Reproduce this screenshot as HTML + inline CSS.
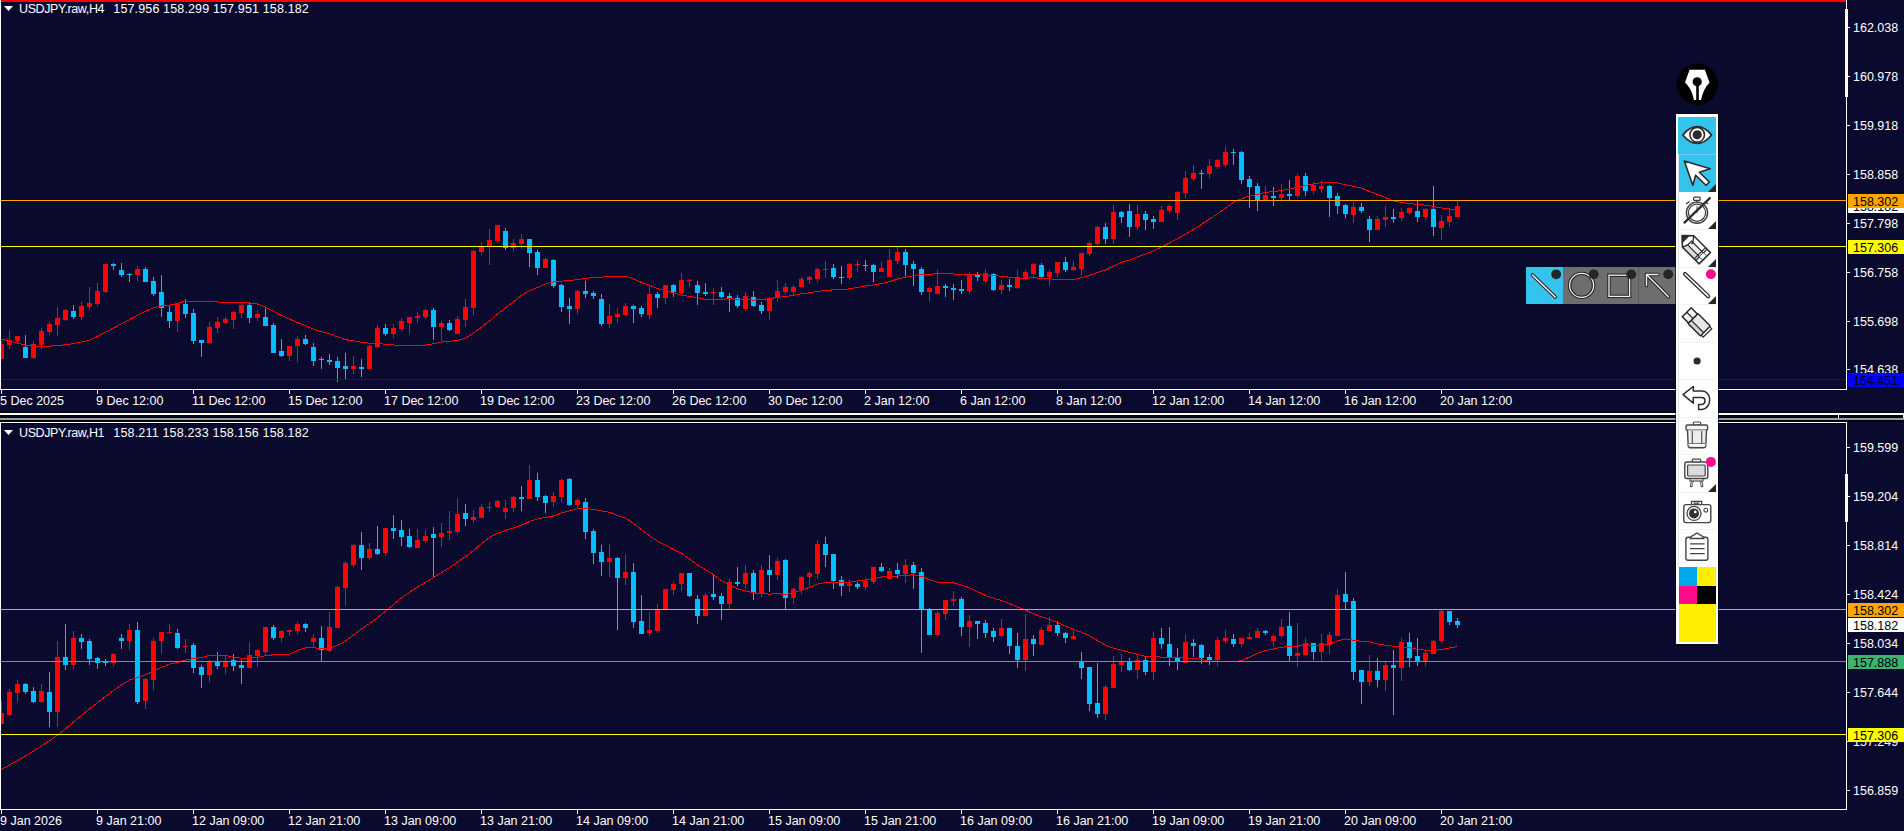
<!DOCTYPE html><html><head><meta charset="utf-8"><style>
html,body{margin:0;padding:0;background:#0a0a2e;width:1904px;height:831px;overflow:hidden}
svg{position:absolute;left:0;top:0;display:block}
text{font-family:"Liberation Sans",sans-serif;font-size:12.5px}
</style></head><body>
<svg width="1904" height="831" viewBox="0 0 1904 831">
<rect width="1904" height="831" fill="#0a0a2e"/>
<defs><clipPath id="ct"><rect x="1" y="2" width="1845" height="387"/></clipPath><clipPath id="cb"><rect x="1" y="424" width="1845" height="385"/></clipPath></defs>
<g shape-rendering="crispEdges">
<rect x="0" y="0" width="1846" height="2" fill="#ff0000"/>
<rect x="0" y="0" width="1" height="390" fill="#fff"/>
<rect x="0" y="389" width="1847" height="1" fill="#fff"/>
<rect x="1846" y="0" width="1" height="390" fill="#fff"/>
<rect x="1845" y="9" width="3" height="88" fill="#fff"/>
<rect x="1847" y="27" width="3" height="1" fill="#fff"/>
<rect x="1847" y="76" width="3" height="1" fill="#fff"/>
<rect x="1847" y="125" width="3" height="1" fill="#fff"/>
<rect x="1847" y="174" width="3" height="1" fill="#fff"/>
<rect x="1847" y="223" width="3" height="1" fill="#fff"/>
<rect x="1847" y="272" width="3" height="1" fill="#fff"/>
<rect x="1847" y="321" width="3" height="1" fill="#fff"/>
<rect x="1847" y="369" width="3" height="1" fill="#fff"/>
<rect x="1" y="390" width="1" height="4" fill="#fff"/>
<rect x="97" y="390" width="1" height="4" fill="#fff"/>
<rect x="193" y="390" width="1" height="4" fill="#fff"/>
<rect x="289" y="390" width="1" height="4" fill="#fff"/>
<rect x="385" y="390" width="1" height="4" fill="#fff"/>
<rect x="481" y="390" width="1" height="4" fill="#fff"/>
<rect x="577" y="390" width="1" height="4" fill="#fff"/>
<rect x="673" y="390" width="1" height="4" fill="#fff"/>
<rect x="769" y="390" width="1" height="4" fill="#fff"/>
<rect x="865" y="390" width="1" height="4" fill="#fff"/>
<rect x="961" y="390" width="1" height="4" fill="#fff"/>
<rect x="1057" y="390" width="1" height="4" fill="#fff"/>
<rect x="1153" y="390" width="1" height="4" fill="#fff"/>
<rect x="1249" y="390" width="1" height="4" fill="#fff"/>
<rect x="1345" y="390" width="1" height="4" fill="#fff"/>
<rect x="1441" y="390" width="1" height="4" fill="#fff"/>
<rect x="0" y="412" width="1904" height="1" fill="#000"/>
<rect x="0" y="413" width="1904" height="2" fill="#fff"/>
<rect x="0" y="415" width="1904" height="1" fill="#000"/>
<rect x="0" y="416" width="1904" height="2" fill="#04041a"/>
<rect x="0" y="418" width="1904" height="2" fill="#9c9c96"/>
<rect x="0" y="420" width="1904" height="2" fill="#020210"/>
<rect x="1838" y="415" width="1" height="3" fill="#fff"/>
<rect x="1903" y="413" width="1" height="5" fill="#fff"/>
<rect x="0" y="422" width="1847" height="1" fill="#fff"/>
<rect x="0" y="423" width="1847" height="1" fill="#000"/>
<rect x="0" y="422" width="1" height="388" fill="#fff"/>
<rect x="0" y="809" width="1847" height="1" fill="#fff"/>
<rect x="1846" y="422" width="1" height="388" fill="#fff"/>
<rect x="1845" y="474" width="3" height="48" fill="#fff"/>
<rect x="1847" y="447" width="3" height="1" fill="#fff"/>
<rect x="1847" y="496" width="3" height="1" fill="#fff"/>
<rect x="1847" y="545" width="3" height="1" fill="#fff"/>
<rect x="1847" y="594" width="3" height="1" fill="#fff"/>
<rect x="1847" y="643" width="3" height="1" fill="#fff"/>
<rect x="1847" y="692" width="3" height="1" fill="#fff"/>
<rect x="1847" y="741" width="3" height="1" fill="#fff"/>
<rect x="1847" y="790" width="3" height="1" fill="#fff"/>
<rect x="1" y="810" width="1" height="4" fill="#fff"/>
<rect x="97" y="810" width="1" height="4" fill="#fff"/>
<rect x="193" y="810" width="1" height="4" fill="#fff"/>
<rect x="289" y="810" width="1" height="4" fill="#fff"/>
<rect x="385" y="810" width="1" height="4" fill="#fff"/>
<rect x="481" y="810" width="1" height="4" fill="#fff"/>
<rect x="577" y="810" width="1" height="4" fill="#fff"/>
<rect x="673" y="810" width="1" height="4" fill="#fff"/>
<rect x="769" y="810" width="1" height="4" fill="#fff"/>
<rect x="865" y="810" width="1" height="4" fill="#fff"/>
<rect x="961" y="810" width="1" height="4" fill="#fff"/>
<rect x="1057" y="810" width="1" height="4" fill="#fff"/>
<rect x="1153" y="810" width="1" height="4" fill="#fff"/>
<rect x="1249" y="810" width="1" height="4" fill="#fff"/>
<rect x="1345" y="810" width="1" height="4" fill="#fff"/>
<rect x="1441" y="810" width="1" height="4" fill="#fff"/>
</g>
<g shape-rendering="crispEdges" clip-path="url(#ct)">
<rect x="1" y="341" width="1" height="18" fill="#ff0000"/>
<rect x="-1" y="344" width="5" height="15" fill="#ff0000"/>
<rect x="9" y="330" width="1" height="19" fill="#ff0000"/>
<rect x="7" y="340" width="5" height="5" fill="#ff0000"/>
<rect x="17" y="336" width="1" height="6" fill="#ff0000"/>
<rect x="15" y="336" width="5" height="5" fill="#ff0000"/>
<rect x="25" y="335" width="1" height="23" fill="#00bfff"/>
<rect x="23" y="347" width="5" height="11" fill="#00bfff"/>
<rect x="33" y="341" width="1" height="18" fill="#ff0000"/>
<rect x="31" y="344" width="5" height="14" fill="#ff0000"/>
<rect x="41" y="328" width="1" height="21" fill="#ff0000"/>
<rect x="39" y="331" width="5" height="14" fill="#ff0000"/>
<rect x="49" y="322" width="1" height="13" fill="#ff0000"/>
<rect x="47" y="324" width="5" height="8" fill="#ff0000"/>
<rect x="57" y="307" width="1" height="29" fill="#ff0000"/>
<rect x="55" y="318" width="5" height="7" fill="#ff0000"/>
<rect x="65" y="309" width="1" height="12" fill="#ff0000"/>
<rect x="63" y="310" width="5" height="10" fill="#ff0000"/>
<rect x="73" y="305" width="1" height="14" fill="#00bfff"/>
<rect x="71" y="311" width="5" height="6" fill="#00bfff"/>
<rect x="81" y="302" width="1" height="18" fill="#ff0000"/>
<rect x="79" y="306" width="5" height="11" fill="#ff0000"/>
<rect x="89" y="287" width="1" height="23" fill="#ff0000"/>
<rect x="87" y="303" width="5" height="4" fill="#ff0000"/>
<rect x="97" y="283" width="1" height="23" fill="#ff0000"/>
<rect x="95" y="291" width="5" height="13" fill="#ff0000"/>
<rect x="105" y="264" width="1" height="29" fill="#ff0000"/>
<rect x="103" y="264" width="5" height="28" fill="#ff0000"/>
<rect x="113" y="263" width="1" height="7" fill="#00bfff"/>
<rect x="111" y="264" width="5" height="2" fill="#00bfff"/>
<rect x="121" y="263" width="1" height="14" fill="#00bfff"/>
<rect x="119" y="270" width="5" height="5" fill="#00bfff"/>
<rect x="129" y="273" width="1" height="9" fill="#00bfff"/>
<rect x="127" y="274" width="5" height="1" fill="#00bfff"/>
<rect x="137" y="266" width="1" height="15" fill="#ff0000"/>
<rect x="135" y="269" width="5" height="6" fill="#ff0000"/>
<rect x="145" y="267" width="1" height="15" fill="#00bfff"/>
<rect x="143" y="269" width="5" height="13" fill="#00bfff"/>
<rect x="153" y="277" width="1" height="19" fill="#00bfff"/>
<rect x="151" y="281" width="5" height="13" fill="#00bfff"/>
<rect x="161" y="275" width="1" height="42" fill="#00bfff"/>
<rect x="159" y="292" width="5" height="16" fill="#00bfff"/>
<rect x="169" y="306" width="1" height="22" fill="#00bfff"/>
<rect x="167" y="312" width="5" height="9" fill="#00bfff"/>
<rect x="177" y="303" width="1" height="29" fill="#ff0000"/>
<rect x="175" y="303" width="5" height="18" fill="#ff0000"/>
<rect x="185" y="299" width="1" height="19" fill="#00bfff"/>
<rect x="183" y="304" width="5" height="10" fill="#00bfff"/>
<rect x="193" y="309" width="1" height="35" fill="#00bfff"/>
<rect x="191" y="313" width="5" height="28" fill="#00bfff"/>
<rect x="201" y="340" width="1" height="17" fill="#00bfff"/>
<rect x="199" y="340" width="5" height="3" fill="#00bfff"/>
<rect x="209" y="322" width="1" height="22" fill="#ff0000"/>
<rect x="207" y="327" width="5" height="16" fill="#ff0000"/>
<rect x="217" y="317" width="1" height="16" fill="#ff0000"/>
<rect x="215" y="322" width="5" height="6" fill="#ff0000"/>
<rect x="225" y="317" width="1" height="7" fill="#ff0000"/>
<rect x="223" y="319" width="5" height="4" fill="#ff0000"/>
<rect x="233" y="311" width="1" height="18" fill="#ff0000"/>
<rect x="231" y="312" width="5" height="8" fill="#ff0000"/>
<rect x="241" y="302" width="1" height="16" fill="#ff0000"/>
<rect x="239" y="305" width="5" height="8" fill="#ff0000"/>
<rect x="249" y="303" width="1" height="20" fill="#00bfff"/>
<rect x="247" y="305" width="5" height="13" fill="#00bfff"/>
<rect x="257" y="310" width="1" height="11" fill="#ff0000"/>
<rect x="255" y="314" width="5" height="4" fill="#ff0000"/>
<rect x="265" y="307" width="1" height="19" fill="#00bfff"/>
<rect x="263" y="317" width="5" height="9" fill="#00bfff"/>
<rect x="273" y="323" width="1" height="30" fill="#00bfff"/>
<rect x="271" y="325" width="5" height="28" fill="#00bfff"/>
<rect x="281" y="339" width="1" height="18" fill="#00bfff"/>
<rect x="279" y="351" width="5" height="5" fill="#00bfff"/>
<rect x="289" y="346" width="1" height="15" fill="#ff0000"/>
<rect x="287" y="346" width="5" height="10" fill="#ff0000"/>
<rect x="297" y="336" width="1" height="26" fill="#ff0000"/>
<rect x="295" y="339" width="5" height="7" fill="#ff0000"/>
<rect x="305" y="335" width="1" height="10" fill="#00bfff"/>
<rect x="303" y="339" width="5" height="5" fill="#00bfff"/>
<rect x="313" y="343" width="1" height="23" fill="#00bfff"/>
<rect x="311" y="347" width="5" height="14" fill="#00bfff"/>
<rect x="321" y="357" width="1" height="12" fill="#00bfff"/>
<rect x="319" y="359" width="5" height="1" fill="#00bfff"/>
<rect x="329" y="354" width="1" height="11" fill="#00bfff"/>
<rect x="327" y="360" width="5" height="2" fill="#00bfff"/>
<rect x="337" y="357" width="1" height="25" fill="#00bfff"/>
<rect x="335" y="361" width="5" height="7" fill="#00bfff"/>
<rect x="345" y="353" width="1" height="26" fill="#00bfff"/>
<rect x="343" y="366" width="5" height="3" fill="#00bfff"/>
<rect x="353" y="356" width="1" height="18" fill="#ff0000"/>
<rect x="351" y="366" width="5" height="3" fill="#ff0000"/>
<rect x="361" y="359" width="1" height="18" fill="#00bfff"/>
<rect x="359" y="367" width="5" height="2" fill="#00bfff"/>
<rect x="369" y="345" width="1" height="24" fill="#ff0000"/>
<rect x="367" y="346" width="5" height="23" fill="#ff0000"/>
<rect x="377" y="325" width="1" height="23" fill="#ff0000"/>
<rect x="375" y="328" width="5" height="19" fill="#ff0000"/>
<rect x="385" y="324" width="1" height="12" fill="#00bfff"/>
<rect x="383" y="328" width="5" height="6" fill="#00bfff"/>
<rect x="393" y="324" width="1" height="14" fill="#ff0000"/>
<rect x="391" y="328" width="5" height="6" fill="#ff0000"/>
<rect x="401" y="318" width="1" height="13" fill="#ff0000"/>
<rect x="399" y="321" width="5" height="8" fill="#ff0000"/>
<rect x="409" y="317" width="1" height="17" fill="#ff0000"/>
<rect x="407" y="317" width="5" height="6" fill="#ff0000"/>
<rect x="417" y="312" width="1" height="11" fill="#ff0000"/>
<rect x="415" y="316" width="5" height="2" fill="#ff0000"/>
<rect x="425" y="309" width="1" height="10" fill="#ff0000"/>
<rect x="423" y="310" width="5" height="7" fill="#ff0000"/>
<rect x="433" y="308" width="1" height="32" fill="#00bfff"/>
<rect x="431" y="310" width="5" height="17" fill="#00bfff"/>
<rect x="441" y="321" width="1" height="20" fill="#ff0000"/>
<rect x="439" y="323" width="5" height="4" fill="#ff0000"/>
<rect x="449" y="320" width="1" height="11" fill="#00bfff"/>
<rect x="447" y="323" width="5" height="7" fill="#00bfff"/>
<rect x="457" y="316" width="1" height="18" fill="#ff0000"/>
<rect x="455" y="319" width="5" height="15" fill="#ff0000"/>
<rect x="465" y="299" width="1" height="28" fill="#ff0000"/>
<rect x="463" y="307" width="5" height="13" fill="#ff0000"/>
<rect x="473" y="250" width="1" height="65" fill="#ff0000"/>
<rect x="471" y="251" width="5" height="57" fill="#ff0000"/>
<rect x="481" y="242" width="1" height="13" fill="#ff0000"/>
<rect x="479" y="246" width="5" height="6" fill="#ff0000"/>
<rect x="489" y="229" width="1" height="36" fill="#ff0000"/>
<rect x="487" y="240" width="5" height="6" fill="#ff0000"/>
<rect x="497" y="225" width="1" height="18" fill="#ff0000"/>
<rect x="495" y="225" width="5" height="16" fill="#ff0000"/>
<rect x="505" y="228" width="1" height="22" fill="#00bfff"/>
<rect x="503" y="231" width="5" height="17" fill="#00bfff"/>
<rect x="513" y="239" width="1" height="12" fill="#ff0000"/>
<rect x="511" y="243" width="5" height="5" fill="#ff0000"/>
<rect x="521" y="234" width="1" height="15" fill="#ff0000"/>
<rect x="519" y="239" width="5" height="5" fill="#ff0000"/>
<rect x="529" y="239" width="1" height="28" fill="#00bfff"/>
<rect x="527" y="239" width="5" height="14" fill="#00bfff"/>
<rect x="537" y="250" width="1" height="25" fill="#00bfff"/>
<rect x="535" y="252" width="5" height="16" fill="#00bfff"/>
<rect x="545" y="258" width="1" height="10" fill="#ff0000"/>
<rect x="543" y="259" width="5" height="9" fill="#ff0000"/>
<rect x="553" y="259" width="1" height="29" fill="#00bfff"/>
<rect x="551" y="260" width="5" height="26" fill="#00bfff"/>
<rect x="561" y="284" width="1" height="28" fill="#00bfff"/>
<rect x="559" y="285" width="5" height="22" fill="#00bfff"/>
<rect x="569" y="298" width="1" height="26" fill="#00bfff"/>
<rect x="567" y="306" width="5" height="3" fill="#00bfff"/>
<rect x="577" y="290" width="1" height="24" fill="#ff0000"/>
<rect x="575" y="291" width="5" height="18" fill="#ff0000"/>
<rect x="585" y="281" width="1" height="17" fill="#00bfff"/>
<rect x="583" y="291" width="5" height="3" fill="#00bfff"/>
<rect x="593" y="291" width="1" height="8" fill="#00bfff"/>
<rect x="591" y="293" width="5" height="3" fill="#00bfff"/>
<rect x="601" y="294" width="1" height="32" fill="#00bfff"/>
<rect x="599" y="299" width="5" height="25" fill="#00bfff"/>
<rect x="609" y="304" width="1" height="24" fill="#ff0000"/>
<rect x="607" y="316" width="5" height="8" fill="#ff0000"/>
<rect x="617" y="308" width="1" height="15" fill="#ff0000"/>
<rect x="615" y="314" width="5" height="3" fill="#ff0000"/>
<rect x="625" y="303" width="1" height="13" fill="#ff0000"/>
<rect x="623" y="306" width="5" height="9" fill="#ff0000"/>
<rect x="633" y="305" width="1" height="18" fill="#00bfff"/>
<rect x="631" y="306" width="5" height="3" fill="#00bfff"/>
<rect x="641" y="306" width="1" height="11" fill="#00bfff"/>
<rect x="639" y="308" width="5" height="6" fill="#00bfff"/>
<rect x="649" y="285" width="1" height="34" fill="#ff0000"/>
<rect x="647" y="294" width="5" height="21" fill="#ff0000"/>
<rect x="657" y="292" width="1" height="16" fill="#00bfff"/>
<rect x="655" y="294" width="5" height="4" fill="#00bfff"/>
<rect x="665" y="285" width="1" height="19" fill="#ff0000"/>
<rect x="663" y="285" width="5" height="13" fill="#ff0000"/>
<rect x="673" y="284" width="1" height="13" fill="#00bfff"/>
<rect x="671" y="285" width="5" height="7" fill="#00bfff"/>
<rect x="681" y="273" width="1" height="21" fill="#ff0000"/>
<rect x="679" y="280" width="5" height="13" fill="#ff0000"/>
<rect x="689" y="279" width="1" height="8" fill="#ff0000"/>
<rect x="687" y="280" width="5" height="1" fill="#ff0000"/>
<rect x="697" y="281" width="1" height="24" fill="#00bfff"/>
<rect x="695" y="285" width="5" height="8" fill="#00bfff"/>
<rect x="705" y="283" width="1" height="13" fill="#00bfff"/>
<rect x="703" y="292" width="5" height="2" fill="#00bfff"/>
<rect x="713" y="288" width="1" height="17" fill="#ff0000"/>
<rect x="711" y="292" width="5" height="1" fill="#ff0000"/>
<rect x="721" y="287" width="1" height="11" fill="#00bfff"/>
<rect x="719" y="292" width="5" height="5" fill="#00bfff"/>
<rect x="729" y="293" width="1" height="19" fill="#00bfff"/>
<rect x="727" y="296" width="5" height="2" fill="#00bfff"/>
<rect x="737" y="295" width="1" height="13" fill="#00bfff"/>
<rect x="735" y="298" width="5" height="8" fill="#00bfff"/>
<rect x="745" y="292" width="1" height="19" fill="#ff0000"/>
<rect x="743" y="296" width="5" height="13" fill="#ff0000"/>
<rect x="753" y="291" width="1" height="16" fill="#00bfff"/>
<rect x="751" y="297" width="5" height="9" fill="#00bfff"/>
<rect x="761" y="302" width="1" height="12" fill="#00bfff"/>
<rect x="759" y="305" width="5" height="6" fill="#00bfff"/>
<rect x="769" y="297" width="1" height="23" fill="#ff0000"/>
<rect x="767" y="298" width="5" height="13" fill="#ff0000"/>
<rect x="777" y="280" width="1" height="22" fill="#ff0000"/>
<rect x="775" y="291" width="5" height="7" fill="#ff0000"/>
<rect x="785" y="283" width="1" height="11" fill="#ff0000"/>
<rect x="783" y="287" width="5" height="5" fill="#ff0000"/>
<rect x="793" y="285" width="1" height="10" fill="#ff0000"/>
<rect x="791" y="287" width="5" height="5" fill="#ff0000"/>
<rect x="801" y="277" width="1" height="11" fill="#ff0000"/>
<rect x="799" y="279" width="5" height="8" fill="#ff0000"/>
<rect x="809" y="276" width="1" height="8" fill="#ff0000"/>
<rect x="807" y="277" width="5" height="3" fill="#ff0000"/>
<rect x="817" y="268" width="1" height="14" fill="#ff0000"/>
<rect x="815" y="269" width="5" height="10" fill="#ff0000"/>
<rect x="825" y="261" width="1" height="17" fill="#ff0000"/>
<rect x="823" y="269" width="5" height="1" fill="#ff0000"/>
<rect x="833" y="264" width="1" height="15" fill="#00bfff"/>
<rect x="831" y="268" width="5" height="9" fill="#00bfff"/>
<rect x="841" y="266" width="1" height="18" fill="#00bfff"/>
<rect x="839" y="277" width="5" height="1" fill="#00bfff"/>
<rect x="849" y="263" width="1" height="17" fill="#ff0000"/>
<rect x="847" y="264" width="5" height="14" fill="#ff0000"/>
<rect x="857" y="261" width="1" height="11" fill="#ff0000"/>
<rect x="855" y="264" width="5" height="1" fill="#ff0000"/>
<rect x="865" y="260" width="1" height="11" fill="#00bfff"/>
<rect x="863" y="265" width="5" height="1" fill="#00bfff"/>
<rect x="873" y="264" width="1" height="18" fill="#00bfff"/>
<rect x="871" y="265" width="5" height="7" fill="#00bfff"/>
<rect x="881" y="262" width="1" height="10" fill="#ff0000"/>
<rect x="879" y="268" width="5" height="4" fill="#ff0000"/>
<rect x="889" y="249" width="1" height="28" fill="#ff0000"/>
<rect x="887" y="260" width="5" height="17" fill="#ff0000"/>
<rect x="897" y="247" width="1" height="17" fill="#ff0000"/>
<rect x="895" y="252" width="5" height="9" fill="#ff0000"/>
<rect x="905" y="249" width="1" height="27" fill="#00bfff"/>
<rect x="903" y="252" width="5" height="13" fill="#00bfff"/>
<rect x="913" y="261" width="1" height="25" fill="#00bfff"/>
<rect x="911" y="264" width="5" height="5" fill="#00bfff"/>
<rect x="921" y="267" width="1" height="28" fill="#00bfff"/>
<rect x="919" y="269" width="5" height="23" fill="#00bfff"/>
<rect x="929" y="287" width="1" height="15" fill="#ff0000"/>
<rect x="927" y="288" width="5" height="4" fill="#ff0000"/>
<rect x="937" y="270" width="1" height="24" fill="#ff0000"/>
<rect x="935" y="286" width="5" height="8" fill="#ff0000"/>
<rect x="945" y="284" width="1" height="13" fill="#00bfff"/>
<rect x="943" y="286" width="5" height="2" fill="#00bfff"/>
<rect x="953" y="284" width="1" height="16" fill="#00bfff"/>
<rect x="951" y="288" width="5" height="2" fill="#00bfff"/>
<rect x="961" y="280" width="1" height="14" fill="#00bfff"/>
<rect x="959" y="289" width="5" height="2" fill="#00bfff"/>
<rect x="969" y="272" width="1" height="22" fill="#ff0000"/>
<rect x="967" y="274" width="5" height="17" fill="#ff0000"/>
<rect x="977" y="272" width="1" height="9" fill="#00bfff"/>
<rect x="975" y="275" width="5" height="2" fill="#00bfff"/>
<rect x="985" y="269" width="1" height="14" fill="#ff0000"/>
<rect x="983" y="273" width="5" height="8" fill="#ff0000"/>
<rect x="993" y="273" width="1" height="18" fill="#00bfff"/>
<rect x="991" y="274" width="5" height="16" fill="#00bfff"/>
<rect x="1001" y="280" width="1" height="14" fill="#ff0000"/>
<rect x="999" y="285" width="5" height="5" fill="#ff0000"/>
<rect x="1009" y="279" width="1" height="12" fill="#00bfff"/>
<rect x="1007" y="285" width="5" height="2" fill="#00bfff"/>
<rect x="1017" y="270" width="1" height="19" fill="#ff0000"/>
<rect x="1015" y="277" width="5" height="11" fill="#ff0000"/>
<rect x="1025" y="270" width="1" height="10" fill="#ff0000"/>
<rect x="1023" y="272" width="5" height="7" fill="#ff0000"/>
<rect x="1033" y="263" width="1" height="16" fill="#ff0000"/>
<rect x="1031" y="264" width="5" height="10" fill="#ff0000"/>
<rect x="1041" y="263" width="1" height="15" fill="#00bfff"/>
<rect x="1039" y="265" width="5" height="12" fill="#00bfff"/>
<rect x="1049" y="270" width="1" height="16" fill="#ff0000"/>
<rect x="1047" y="272" width="5" height="5" fill="#ff0000"/>
<rect x="1057" y="262" width="1" height="15" fill="#ff0000"/>
<rect x="1055" y="262" width="5" height="11" fill="#ff0000"/>
<rect x="1065" y="257" width="1" height="15" fill="#00bfff"/>
<rect x="1063" y="262" width="5" height="8" fill="#00bfff"/>
<rect x="1073" y="261" width="1" height="10" fill="#ff0000"/>
<rect x="1071" y="267" width="5" height="3" fill="#ff0000"/>
<rect x="1081" y="253" width="1" height="23" fill="#ff0000"/>
<rect x="1079" y="253" width="5" height="16" fill="#ff0000"/>
<rect x="1089" y="242" width="1" height="14" fill="#ff0000"/>
<rect x="1087" y="243" width="5" height="11" fill="#ff0000"/>
<rect x="1097" y="226" width="1" height="20" fill="#ff0000"/>
<rect x="1095" y="227" width="5" height="17" fill="#ff0000"/>
<rect x="1105" y="223" width="1" height="21" fill="#00bfff"/>
<rect x="1103" y="227" width="5" height="12" fill="#00bfff"/>
<rect x="1113" y="205" width="1" height="39" fill="#ff0000"/>
<rect x="1111" y="212" width="5" height="27" fill="#ff0000"/>
<rect x="1121" y="211" width="1" height="12" fill="#00bfff"/>
<rect x="1119" y="212" width="5" height="5" fill="#00bfff"/>
<rect x="1129" y="204" width="1" height="33" fill="#00bfff"/>
<rect x="1127" y="211" width="5" height="16" fill="#00bfff"/>
<rect x="1137" y="205" width="1" height="25" fill="#ff0000"/>
<rect x="1135" y="214" width="5" height="13" fill="#ff0000"/>
<rect x="1145" y="211" width="1" height="19" fill="#00bfff"/>
<rect x="1143" y="214" width="5" height="6" fill="#00bfff"/>
<rect x="1153" y="216" width="1" height="13" fill="#00bfff"/>
<rect x="1151" y="219" width="5" height="3" fill="#00bfff"/>
<rect x="1161" y="206" width="1" height="16" fill="#ff0000"/>
<rect x="1159" y="210" width="5" height="12" fill="#ff0000"/>
<rect x="1169" y="205" width="1" height="8" fill="#ff0000"/>
<rect x="1167" y="206" width="5" height="5" fill="#ff0000"/>
<rect x="1177" y="191" width="1" height="29" fill="#ff0000"/>
<rect x="1175" y="192" width="5" height="21" fill="#ff0000"/>
<rect x="1185" y="171" width="1" height="27" fill="#ff0000"/>
<rect x="1183" y="178" width="5" height="15" fill="#ff0000"/>
<rect x="1193" y="165" width="1" height="16" fill="#ff0000"/>
<rect x="1191" y="173" width="5" height="6" fill="#ff0000"/>
<rect x="1201" y="170" width="1" height="19" fill="#00bfff"/>
<rect x="1199" y="173" width="5" height="1" fill="#00bfff"/>
<rect x="1209" y="159" width="1" height="19" fill="#ff0000"/>
<rect x="1207" y="166" width="5" height="8" fill="#ff0000"/>
<rect x="1217" y="159" width="1" height="10" fill="#ff0000"/>
<rect x="1215" y="160" width="5" height="7" fill="#ff0000"/>
<rect x="1225" y="146" width="1" height="21" fill="#ff0000"/>
<rect x="1223" y="152" width="5" height="13" fill="#ff0000"/>
<rect x="1233" y="149" width="1" height="16" fill="#00bfff"/>
<rect x="1231" y="152" width="5" height="1" fill="#00bfff"/>
<rect x="1241" y="151" width="1" height="33" fill="#00bfff"/>
<rect x="1239" y="152" width="5" height="28" fill="#00bfff"/>
<rect x="1249" y="176" width="1" height="32" fill="#00bfff"/>
<rect x="1247" y="179" width="5" height="8" fill="#00bfff"/>
<rect x="1257" y="183" width="1" height="28" fill="#00bfff"/>
<rect x="1255" y="186" width="5" height="14" fill="#00bfff"/>
<rect x="1265" y="186" width="1" height="14" fill="#ff0000"/>
<rect x="1263" y="195" width="5" height="5" fill="#ff0000"/>
<rect x="1273" y="187" width="1" height="19" fill="#00bfff"/>
<rect x="1271" y="196" width="5" height="2" fill="#00bfff"/>
<rect x="1281" y="184" width="1" height="16" fill="#ff0000"/>
<rect x="1279" y="194" width="5" height="4" fill="#ff0000"/>
<rect x="1289" y="180" width="1" height="20" fill="#00bfff"/>
<rect x="1287" y="194" width="5" height="2" fill="#00bfff"/>
<rect x="1297" y="174" width="1" height="24" fill="#ff0000"/>
<rect x="1295" y="176" width="5" height="20" fill="#ff0000"/>
<rect x="1305" y="173" width="1" height="23" fill="#00bfff"/>
<rect x="1303" y="176" width="5" height="15" fill="#00bfff"/>
<rect x="1313" y="182" width="1" height="12" fill="#ff0000"/>
<rect x="1311" y="185" width="5" height="6" fill="#ff0000"/>
<rect x="1321" y="181" width="1" height="12" fill="#ff0000"/>
<rect x="1319" y="186" width="5" height="3" fill="#ff0000"/>
<rect x="1329" y="185" width="1" height="32" fill="#00bfff"/>
<rect x="1327" y="186" width="5" height="12" fill="#00bfff"/>
<rect x="1337" y="193" width="1" height="21" fill="#00bfff"/>
<rect x="1335" y="196" width="5" height="10" fill="#00bfff"/>
<rect x="1345" y="204" width="1" height="14" fill="#00bfff"/>
<rect x="1343" y="205" width="5" height="9" fill="#00bfff"/>
<rect x="1353" y="202" width="1" height="21" fill="#ff0000"/>
<rect x="1351" y="207" width="5" height="8" fill="#ff0000"/>
<rect x="1361" y="203" width="1" height="10" fill="#00bfff"/>
<rect x="1359" y="207" width="5" height="4" fill="#00bfff"/>
<rect x="1369" y="216" width="1" height="26" fill="#00bfff"/>
<rect x="1367" y="219" width="5" height="11" fill="#00bfff"/>
<rect x="1377" y="216" width="1" height="14" fill="#ff0000"/>
<rect x="1375" y="219" width="5" height="11" fill="#ff0000"/>
<rect x="1385" y="206" width="1" height="21" fill="#ff0000"/>
<rect x="1383" y="217" width="5" height="3" fill="#ff0000"/>
<rect x="1393" y="209" width="1" height="14" fill="#00bfff"/>
<rect x="1391" y="217" width="5" height="2" fill="#00bfff"/>
<rect x="1401" y="208" width="1" height="13" fill="#ff0000"/>
<rect x="1399" y="212" width="5" height="6" fill="#ff0000"/>
<rect x="1409" y="207" width="1" height="8" fill="#ff0000"/>
<rect x="1407" y="208" width="5" height="5" fill="#ff0000"/>
<rect x="1417" y="201" width="1" height="21" fill="#00bfff"/>
<rect x="1415" y="211" width="5" height="6" fill="#00bfff"/>
<rect x="1425" y="208" width="1" height="12" fill="#ff0000"/>
<rect x="1423" y="209" width="5" height="8" fill="#ff0000"/>
<rect x="1433" y="186" width="1" height="50" fill="#00bfff"/>
<rect x="1431" y="209" width="5" height="18" fill="#00bfff"/>
<rect x="1441" y="215" width="1" height="25" fill="#ff0000"/>
<rect x="1439" y="221" width="5" height="7" fill="#ff0000"/>
<rect x="1449" y="208" width="1" height="19" fill="#ff0000"/>
<rect x="1447" y="216" width="5" height="6" fill="#ff0000"/>
<rect x="1457" y="200" width="1" height="17" fill="#ff0000"/>
<rect x="1455" y="206" width="5" height="11" fill="#ff0000"/>
<polyline points="-6.5,338.9 1.5,339.2 9.5,341.2 17.5,343.2 25.5,345.2 33.5,346.0 41.5,346.7 49.5,346.1 57.5,345.5 65.5,344.8 73.5,343.6 81.5,341.9 89.5,340.2 97.5,336.5 105.5,332.3 113.5,328.0 121.5,323.8 129.5,319.6 137.5,315.3 145.5,311.4 153.5,307.8 161.5,306.0 169.5,305.1 177.5,303.4 185.5,301.2 193.5,301.1 201.5,301.6 209.5,301.8 217.5,302.0 225.5,302.5 233.5,302.2 241.5,302.1 249.5,302.9 257.5,304.0 265.5,307.1 273.5,311.4 281.5,315.5 289.5,319.1 297.5,322.6 305.5,325.7 313.5,329.1 321.5,331.7 329.5,333.7 337.5,336.9 345.5,339.7 353.5,340.9 361.5,342.3 369.5,343.2 377.5,343.5 385.5,344.2 393.5,345.0 401.5,345.8 409.5,345.8 417.5,345.9 425.5,345.1 433.5,343.8 441.5,342.1 449.5,341.3 457.5,340.3 465.5,338.5 473.5,332.9 481.5,327.2 489.5,321.1 497.5,314.0 505.5,307.9 513.5,301.8 521.5,295.3 529.5,290.6 537.5,287.6 545.5,283.9 553.5,281.8 561.5,281.1 569.5,280.7 577.5,279.4 585.5,278.6 593.5,277.1 601.5,277.1 609.5,276.4 617.5,276.2 625.5,276.1 633.5,279.0 641.5,282.4 649.5,285.1 657.5,288.7 665.5,290.6 673.5,293.1 681.5,295.1 689.5,296.5 697.5,297.7 705.5,299.5 713.5,299.8 721.5,299.3 729.5,298.7 737.5,299.5 745.5,299.6 753.5,300.1 761.5,299.5 769.5,298.6 777.5,297.4 785.5,296.5 793.5,295.4 801.5,293.7 809.5,292.8 817.5,291.4 825.5,290.6 833.5,289.8 841.5,289.7 849.5,288.9 857.5,287.4 865.5,286.0 873.5,285.0 881.5,283.6 889.5,281.7 897.5,279.0 905.5,277.4 913.5,275.6 921.5,274.6 929.5,274.1 937.5,273.9 945.5,273.9 953.5,274.0 961.5,274.6 969.5,274.5 977.5,274.9 985.5,275.1 993.5,275.8 1001.5,276.1 1009.5,277.3 1017.5,277.9 1025.5,278.2 1033.5,277.8 1041.5,278.3 1049.5,278.9 1057.5,279.4 1065.5,279.7 1073.5,279.6 1081.5,277.6 1089.5,275.4 1097.5,272.4 1105.5,270.0 1113.5,266.1 1121.5,262.4 1129.5,260.1 1137.5,256.9 1145.5,254.2 1153.5,250.8 1161.5,247.1 1169.5,243.0 1177.5,238.7 1185.5,234.1 1193.5,229.5 1201.5,224.3 1209.5,219.1 1217.5,213.9 1225.5,208.0 1233.5,202.3 1241.5,198.7 1249.5,195.9 1257.5,194.5 1265.5,192.3 1273.5,191.7 1281.5,190.5 1289.5,189.0 1297.5,187.1 1305.5,185.6 1313.5,183.8 1321.5,182.6 1329.5,182.2 1337.5,182.9 1345.5,184.7 1353.5,186.4 1361.5,188.2 1369.5,191.4 1377.5,194.4 1385.5,197.6 1393.5,200.9 1401.5,202.5 1409.5,203.6 1417.5,204.4 1425.5,205.1 1433.5,206.5 1441.5,207.9 1449.5,208.9 1457.5,210.4" fill="none" stroke="#ff0000" stroke-width="1" shape-rendering="crispEdges"/>
</g>
<g shape-rendering="crispEdges">
<rect x="1" y="200" width="1845" height="1" fill="#ffa500"/>
<rect x="1" y="246" width="1845" height="1" fill="#ffff00"/>
<rect x="1" y="379" width="1845" height="1" fill="#0000ff"/>
</g>
<g shape-rendering="crispEdges" clip-path="url(#cb)">
<rect x="1" y="701" width="1" height="23" fill="#ff0000"/>
<rect x="-1" y="713" width="5" height="11" fill="#ff0000"/>
<rect x="9" y="689" width="1" height="27" fill="#ff0000"/>
<rect x="7" y="692" width="5" height="23" fill="#ff0000"/>
<rect x="17" y="680" width="1" height="22" fill="#ff0000"/>
<rect x="15" y="684" width="5" height="9" fill="#ff0000"/>
<rect x="25" y="683" width="1" height="11" fill="#00bfff"/>
<rect x="23" y="684" width="5" height="8" fill="#00bfff"/>
<rect x="33" y="687" width="1" height="16" fill="#00bfff"/>
<rect x="31" y="691" width="5" height="11" fill="#00bfff"/>
<rect x="41" y="684" width="1" height="19" fill="#ff0000"/>
<rect x="39" y="691" width="5" height="11" fill="#ff0000"/>
<rect x="49" y="672" width="1" height="55" fill="#00bfff"/>
<rect x="47" y="692" width="5" height="20" fill="#00bfff"/>
<rect x="57" y="641" width="1" height="86" fill="#ff0000"/>
<rect x="55" y="657" width="5" height="55" fill="#ff0000"/>
<rect x="65" y="624" width="1" height="46" fill="#00bfff"/>
<rect x="63" y="657" width="5" height="8" fill="#00bfff"/>
<rect x="73" y="631" width="1" height="38" fill="#ff0000"/>
<rect x="71" y="638" width="5" height="27" fill="#ff0000"/>
<rect x="81" y="634" width="1" height="15" fill="#00bfff"/>
<rect x="79" y="638" width="5" height="4" fill="#00bfff"/>
<rect x="89" y="639" width="1" height="26" fill="#00bfff"/>
<rect x="87" y="641" width="5" height="18" fill="#00bfff"/>
<rect x="97" y="657" width="1" height="12" fill="#00bfff"/>
<rect x="95" y="658" width="5" height="5" fill="#00bfff"/>
<rect x="105" y="659" width="1" height="7" fill="#00bfff"/>
<rect x="103" y="661" width="5" height="2" fill="#00bfff"/>
<rect x="113" y="653" width="1" height="13" fill="#ff0000"/>
<rect x="111" y="654" width="5" height="9" fill="#ff0000"/>
<rect x="121" y="634" width="1" height="15" fill="#00bfff"/>
<rect x="119" y="638" width="5" height="3" fill="#00bfff"/>
<rect x="129" y="624" width="1" height="26" fill="#ff0000"/>
<rect x="127" y="630" width="5" height="11" fill="#ff0000"/>
<rect x="137" y="622" width="1" height="82" fill="#00bfff"/>
<rect x="135" y="630" width="5" height="72" fill="#00bfff"/>
<rect x="145" y="678" width="1" height="31" fill="#ff0000"/>
<rect x="143" y="679" width="5" height="22" fill="#ff0000"/>
<rect x="153" y="638" width="1" height="52" fill="#ff0000"/>
<rect x="151" y="641" width="5" height="39" fill="#ff0000"/>
<rect x="161" y="632" width="1" height="22" fill="#ff0000"/>
<rect x="159" y="632" width="5" height="9" fill="#ff0000"/>
<rect x="169" y="624" width="1" height="9" fill="#ff0000"/>
<rect x="167" y="632" width="5" height="1" fill="#ff0000"/>
<rect x="177" y="629" width="1" height="20" fill="#00bfff"/>
<rect x="175" y="633" width="5" height="15" fill="#00bfff"/>
<rect x="185" y="639" width="1" height="14" fill="#ff0000"/>
<rect x="183" y="646" width="5" height="1" fill="#ff0000"/>
<rect x="193" y="643" width="1" height="30" fill="#00bfff"/>
<rect x="191" y="645" width="5" height="23" fill="#00bfff"/>
<rect x="201" y="665" width="1" height="23" fill="#00bfff"/>
<rect x="199" y="667" width="5" height="8" fill="#00bfff"/>
<rect x="209" y="660" width="1" height="22" fill="#ff0000"/>
<rect x="207" y="662" width="5" height="13" fill="#ff0000"/>
<rect x="217" y="652" width="1" height="17" fill="#00bfff"/>
<rect x="215" y="661" width="5" height="5" fill="#00bfff"/>
<rect x="225" y="656" width="1" height="18" fill="#ff0000"/>
<rect x="223" y="661" width="5" height="6" fill="#ff0000"/>
<rect x="233" y="654" width="1" height="17" fill="#00bfff"/>
<rect x="231" y="660" width="5" height="6" fill="#00bfff"/>
<rect x="241" y="660" width="1" height="24" fill="#00bfff"/>
<rect x="239" y="665" width="5" height="3" fill="#00bfff"/>
<rect x="249" y="642" width="1" height="26" fill="#ff0000"/>
<rect x="247" y="655" width="5" height="13" fill="#ff0000"/>
<rect x="257" y="650" width="1" height="17" fill="#ff0000"/>
<rect x="255" y="650" width="5" height="6" fill="#ff0000"/>
<rect x="265" y="627" width="1" height="28" fill="#ff0000"/>
<rect x="263" y="627" width="5" height="25" fill="#ff0000"/>
<rect x="273" y="625" width="1" height="15" fill="#00bfff"/>
<rect x="271" y="627" width="5" height="11" fill="#00bfff"/>
<rect x="281" y="630" width="1" height="12" fill="#ff0000"/>
<rect x="279" y="631" width="5" height="7" fill="#ff0000"/>
<rect x="289" y="630" width="1" height="6" fill="#ff0000"/>
<rect x="287" y="630" width="5" height="2" fill="#ff0000"/>
<rect x="297" y="622" width="1" height="12" fill="#ff0000"/>
<rect x="295" y="624" width="5" height="7" fill="#ff0000"/>
<rect x="305" y="623" width="1" height="9" fill="#00bfff"/>
<rect x="303" y="624" width="5" height="4" fill="#00bfff"/>
<rect x="313" y="634" width="1" height="13" fill="#ff0000"/>
<rect x="311" y="638" width="5" height="4" fill="#ff0000"/>
<rect x="321" y="626" width="1" height="35" fill="#00bfff"/>
<rect x="319" y="638" width="5" height="12" fill="#00bfff"/>
<rect x="329" y="612" width="1" height="40" fill="#ff0000"/>
<rect x="327" y="627" width="5" height="24" fill="#ff0000"/>
<rect x="337" y="586" width="1" height="42" fill="#ff0000"/>
<rect x="335" y="587" width="5" height="41" fill="#ff0000"/>
<rect x="345" y="561" width="1" height="45" fill="#ff0000"/>
<rect x="343" y="563" width="5" height="25" fill="#ff0000"/>
<rect x="353" y="544" width="1" height="23" fill="#ff0000"/>
<rect x="351" y="545" width="5" height="20" fill="#ff0000"/>
<rect x="361" y="532" width="1" height="38" fill="#00bfff"/>
<rect x="359" y="545" width="5" height="13" fill="#00bfff"/>
<rect x="369" y="543" width="1" height="17" fill="#ff0000"/>
<rect x="367" y="549" width="5" height="9" fill="#ff0000"/>
<rect x="377" y="526" width="1" height="29" fill="#00bfff"/>
<rect x="375" y="549" width="5" height="5" fill="#00bfff"/>
<rect x="385" y="528" width="1" height="28" fill="#ff0000"/>
<rect x="383" y="528" width="5" height="25" fill="#ff0000"/>
<rect x="393" y="515" width="1" height="24" fill="#00bfff"/>
<rect x="391" y="528" width="5" height="3" fill="#00bfff"/>
<rect x="401" y="520" width="1" height="26" fill="#00bfff"/>
<rect x="399" y="530" width="5" height="7" fill="#00bfff"/>
<rect x="409" y="529" width="1" height="19" fill="#00bfff"/>
<rect x="407" y="536" width="5" height="11" fill="#00bfff"/>
<rect x="417" y="529" width="1" height="19" fill="#ff0000"/>
<rect x="415" y="540" width="5" height="8" fill="#ff0000"/>
<rect x="425" y="530" width="1" height="13" fill="#ff0000"/>
<rect x="423" y="536" width="5" height="5" fill="#ff0000"/>
<rect x="433" y="527" width="1" height="50" fill="#00bfff"/>
<rect x="431" y="534" width="5" height="4" fill="#00bfff"/>
<rect x="441" y="523" width="1" height="24" fill="#ff0000"/>
<rect x="439" y="533" width="5" height="4" fill="#ff0000"/>
<rect x="449" y="511" width="1" height="29" fill="#ff0000"/>
<rect x="447" y="531" width="5" height="2" fill="#ff0000"/>
<rect x="457" y="498" width="1" height="36" fill="#ff0000"/>
<rect x="455" y="514" width="5" height="18" fill="#ff0000"/>
<rect x="465" y="504" width="1" height="22" fill="#00bfff"/>
<rect x="463" y="513" width="5" height="6" fill="#00bfff"/>
<rect x="473" y="510" width="1" height="13" fill="#ff0000"/>
<rect x="471" y="517" width="5" height="3" fill="#ff0000"/>
<rect x="481" y="504" width="1" height="14" fill="#ff0000"/>
<rect x="479" y="507" width="5" height="11" fill="#ff0000"/>
<rect x="489" y="502" width="1" height="10" fill="#ff0000"/>
<rect x="487" y="507" width="5" height="1" fill="#ff0000"/>
<rect x="497" y="500" width="1" height="8" fill="#ff0000"/>
<rect x="495" y="501" width="5" height="6" fill="#ff0000"/>
<rect x="505" y="500" width="1" height="19" fill="#ff0000"/>
<rect x="503" y="508" width="5" height="4" fill="#ff0000"/>
<rect x="513" y="496" width="1" height="16" fill="#ff0000"/>
<rect x="511" y="497" width="5" height="11" fill="#ff0000"/>
<rect x="521" y="486" width="1" height="25" fill="#00bfff"/>
<rect x="519" y="497" width="5" height="2" fill="#00bfff"/>
<rect x="529" y="465" width="1" height="34" fill="#ff0000"/>
<rect x="527" y="480" width="5" height="19" fill="#ff0000"/>
<rect x="537" y="473" width="1" height="28" fill="#00bfff"/>
<rect x="535" y="480" width="5" height="17" fill="#00bfff"/>
<rect x="545" y="495" width="1" height="18" fill="#00bfff"/>
<rect x="543" y="496" width="5" height="7" fill="#00bfff"/>
<rect x="553" y="492" width="1" height="15" fill="#ff0000"/>
<rect x="551" y="496" width="5" height="6" fill="#ff0000"/>
<rect x="561" y="479" width="1" height="23" fill="#ff0000"/>
<rect x="559" y="480" width="5" height="17" fill="#ff0000"/>
<rect x="569" y="478" width="1" height="28" fill="#00bfff"/>
<rect x="567" y="479" width="5" height="26" fill="#00bfff"/>
<rect x="577" y="498" width="1" height="10" fill="#ff0000"/>
<rect x="575" y="500" width="5" height="5" fill="#ff0000"/>
<rect x="585" y="498" width="1" height="41" fill="#00bfff"/>
<rect x="583" y="502" width="5" height="30" fill="#00bfff"/>
<rect x="593" y="529" width="1" height="35" fill="#00bfff"/>
<rect x="591" y="531" width="5" height="22" fill="#00bfff"/>
<rect x="601" y="545" width="1" height="31" fill="#00bfff"/>
<rect x="599" y="552" width="5" height="10" fill="#00bfff"/>
<rect x="609" y="544" width="1" height="33" fill="#ff0000"/>
<rect x="607" y="558" width="5" height="4" fill="#ff0000"/>
<rect x="617" y="557" width="1" height="73" fill="#00bfff"/>
<rect x="615" y="558" width="5" height="20" fill="#00bfff"/>
<rect x="625" y="554" width="1" height="31" fill="#ff0000"/>
<rect x="623" y="572" width="5" height="6" fill="#ff0000"/>
<rect x="633" y="563" width="1" height="65" fill="#00bfff"/>
<rect x="631" y="572" width="5" height="50" fill="#00bfff"/>
<rect x="641" y="595" width="1" height="39" fill="#00bfff"/>
<rect x="639" y="621" width="5" height="13" fill="#00bfff"/>
<rect x="649" y="612" width="1" height="24" fill="#ff0000"/>
<rect x="647" y="630" width="5" height="3" fill="#ff0000"/>
<rect x="657" y="604" width="1" height="29" fill="#ff0000"/>
<rect x="655" y="609" width="5" height="22" fill="#ff0000"/>
<rect x="665" y="589" width="1" height="21" fill="#ff0000"/>
<rect x="663" y="589" width="5" height="21" fill="#ff0000"/>
<rect x="673" y="582" width="1" height="13" fill="#ff0000"/>
<rect x="671" y="584" width="5" height="6" fill="#ff0000"/>
<rect x="681" y="573" width="1" height="18" fill="#ff0000"/>
<rect x="679" y="573" width="5" height="11" fill="#ff0000"/>
<rect x="689" y="573" width="1" height="24" fill="#00bfff"/>
<rect x="687" y="573" width="5" height="23" fill="#00bfff"/>
<rect x="697" y="595" width="1" height="29" fill="#00bfff"/>
<rect x="695" y="599" width="5" height="17" fill="#00bfff"/>
<rect x="705" y="593" width="1" height="23" fill="#ff0000"/>
<rect x="703" y="595" width="5" height="21" fill="#ff0000"/>
<rect x="713" y="575" width="1" height="25" fill="#00bfff"/>
<rect x="711" y="594" width="5" height="3" fill="#00bfff"/>
<rect x="721" y="593" width="1" height="27" fill="#00bfff"/>
<rect x="719" y="596" width="5" height="8" fill="#00bfff"/>
<rect x="729" y="579" width="1" height="30" fill="#ff0000"/>
<rect x="727" y="582" width="5" height="22" fill="#ff0000"/>
<rect x="737" y="567" width="1" height="19" fill="#00bfff"/>
<rect x="735" y="582" width="5" height="2" fill="#00bfff"/>
<rect x="745" y="565" width="1" height="24" fill="#ff0000"/>
<rect x="743" y="573" width="5" height="11" fill="#ff0000"/>
<rect x="753" y="570" width="1" height="30" fill="#00bfff"/>
<rect x="751" y="573" width="5" height="20" fill="#00bfff"/>
<rect x="761" y="565" width="1" height="32" fill="#ff0000"/>
<rect x="759" y="570" width="5" height="23" fill="#ff0000"/>
<rect x="769" y="555" width="1" height="37" fill="#00bfff"/>
<rect x="767" y="570" width="5" height="5" fill="#00bfff"/>
<rect x="777" y="558" width="1" height="22" fill="#ff0000"/>
<rect x="775" y="561" width="5" height="14" fill="#ff0000"/>
<rect x="785" y="559" width="1" height="50" fill="#00bfff"/>
<rect x="783" y="560" width="5" height="38" fill="#00bfff"/>
<rect x="793" y="588" width="1" height="16" fill="#ff0000"/>
<rect x="791" y="589" width="5" height="9" fill="#ff0000"/>
<rect x="801" y="576" width="1" height="18" fill="#ff0000"/>
<rect x="799" y="577" width="5" height="13" fill="#ff0000"/>
<rect x="809" y="572" width="1" height="14" fill="#ff0000"/>
<rect x="807" y="573" width="5" height="4" fill="#ff0000"/>
<rect x="817" y="540" width="1" height="39" fill="#ff0000"/>
<rect x="815" y="544" width="5" height="30" fill="#ff0000"/>
<rect x="825" y="537" width="1" height="30" fill="#00bfff"/>
<rect x="823" y="544" width="5" height="11" fill="#00bfff"/>
<rect x="833" y="554" width="1" height="35" fill="#00bfff"/>
<rect x="831" y="554" width="5" height="27" fill="#00bfff"/>
<rect x="841" y="576" width="1" height="20" fill="#00bfff"/>
<rect x="839" y="580" width="5" height="6" fill="#00bfff"/>
<rect x="849" y="580" width="1" height="12" fill="#ff0000"/>
<rect x="847" y="584" width="5" height="2" fill="#ff0000"/>
<rect x="857" y="582" width="1" height="7" fill="#00bfff"/>
<rect x="855" y="584" width="5" height="3" fill="#00bfff"/>
<rect x="865" y="578" width="1" height="12" fill="#ff0000"/>
<rect x="863" y="581" width="5" height="6" fill="#ff0000"/>
<rect x="873" y="567" width="1" height="17" fill="#ff0000"/>
<rect x="871" y="567" width="5" height="15" fill="#ff0000"/>
<rect x="881" y="563" width="1" height="9" fill="#00bfff"/>
<rect x="879" y="567" width="5" height="4" fill="#00bfff"/>
<rect x="889" y="568" width="1" height="11" fill="#ff0000"/>
<rect x="887" y="571" width="5" height="8" fill="#ff0000"/>
<rect x="897" y="563" width="1" height="15" fill="#00bfff"/>
<rect x="895" y="570" width="5" height="4" fill="#00bfff"/>
<rect x="905" y="559" width="1" height="24" fill="#ff0000"/>
<rect x="903" y="565" width="5" height="9" fill="#ff0000"/>
<rect x="913" y="562" width="1" height="27" fill="#00bfff"/>
<rect x="911" y="565" width="5" height="8" fill="#00bfff"/>
<rect x="921" y="568" width="1" height="85" fill="#00bfff"/>
<rect x="919" y="572" width="5" height="37" fill="#00bfff"/>
<rect x="929" y="608" width="1" height="27" fill="#00bfff"/>
<rect x="927" y="610" width="5" height="25" fill="#00bfff"/>
<rect x="937" y="611" width="1" height="25" fill="#ff0000"/>
<rect x="935" y="613" width="5" height="22" fill="#ff0000"/>
<rect x="945" y="600" width="1" height="20" fill="#ff0000"/>
<rect x="943" y="600" width="5" height="14" fill="#ff0000"/>
<rect x="953" y="591" width="1" height="15" fill="#ff0000"/>
<rect x="951" y="599" width="5" height="2" fill="#ff0000"/>
<rect x="961" y="597" width="1" height="39" fill="#00bfff"/>
<rect x="959" y="599" width="5" height="28" fill="#00bfff"/>
<rect x="969" y="615" width="1" height="32" fill="#ff0000"/>
<rect x="967" y="621" width="5" height="6" fill="#ff0000"/>
<rect x="977" y="621" width="1" height="18" fill="#00bfff"/>
<rect x="975" y="621" width="5" height="3" fill="#00bfff"/>
<rect x="985" y="620" width="1" height="18" fill="#00bfff"/>
<rect x="983" y="623" width="5" height="10" fill="#00bfff"/>
<rect x="993" y="628" width="1" height="14" fill="#00bfff"/>
<rect x="991" y="631" width="5" height="6" fill="#00bfff"/>
<rect x="1001" y="619" width="1" height="19" fill="#ff0000"/>
<rect x="999" y="628" width="5" height="8" fill="#ff0000"/>
<rect x="1009" y="628" width="1" height="26" fill="#00bfff"/>
<rect x="1007" y="628" width="5" height="18" fill="#00bfff"/>
<rect x="1017" y="633" width="1" height="35" fill="#00bfff"/>
<rect x="1015" y="646" width="5" height="14" fill="#00bfff"/>
<rect x="1025" y="614" width="1" height="57" fill="#ff0000"/>
<rect x="1023" y="639" width="5" height="21" fill="#ff0000"/>
<rect x="1033" y="635" width="1" height="21" fill="#00bfff"/>
<rect x="1031" y="639" width="5" height="5" fill="#00bfff"/>
<rect x="1041" y="627" width="1" height="18" fill="#ff0000"/>
<rect x="1039" y="630" width="5" height="15" fill="#ff0000"/>
<rect x="1049" y="617" width="1" height="14" fill="#ff0000"/>
<rect x="1047" y="625" width="5" height="6" fill="#ff0000"/>
<rect x="1057" y="621" width="1" height="15" fill="#00bfff"/>
<rect x="1055" y="625" width="5" height="8" fill="#00bfff"/>
<rect x="1065" y="632" width="1" height="11" fill="#00bfff"/>
<rect x="1063" y="633" width="5" height="5" fill="#00bfff"/>
<rect x="1073" y="630" width="1" height="10" fill="#ff0000"/>
<rect x="1071" y="636" width="5" height="3" fill="#ff0000"/>
<rect x="1081" y="652" width="1" height="27" fill="#00bfff"/>
<rect x="1079" y="662" width="5" height="6" fill="#00bfff"/>
<rect x="1089" y="667" width="1" height="44" fill="#00bfff"/>
<rect x="1087" y="667" width="5" height="37" fill="#00bfff"/>
<rect x="1097" y="663" width="1" height="55" fill="#00bfff"/>
<rect x="1095" y="703" width="5" height="11" fill="#00bfff"/>
<rect x="1105" y="685" width="1" height="35" fill="#ff0000"/>
<rect x="1103" y="687" width="5" height="27" fill="#ff0000"/>
<rect x="1113" y="656" width="1" height="32" fill="#ff0000"/>
<rect x="1111" y="664" width="5" height="24" fill="#ff0000"/>
<rect x="1121" y="654" width="1" height="18" fill="#ff0000"/>
<rect x="1119" y="662" width="5" height="3" fill="#ff0000"/>
<rect x="1129" y="658" width="1" height="13" fill="#00bfff"/>
<rect x="1127" y="661" width="5" height="9" fill="#00bfff"/>
<rect x="1137" y="654" width="1" height="25" fill="#ff0000"/>
<rect x="1135" y="660" width="5" height="10" fill="#ff0000"/>
<rect x="1145" y="656" width="1" height="19" fill="#00bfff"/>
<rect x="1143" y="660" width="5" height="12" fill="#00bfff"/>
<rect x="1153" y="632" width="1" height="48" fill="#ff0000"/>
<rect x="1151" y="638" width="5" height="34" fill="#ff0000"/>
<rect x="1161" y="628" width="1" height="21" fill="#00bfff"/>
<rect x="1159" y="638" width="5" height="6" fill="#00bfff"/>
<rect x="1169" y="627" width="1" height="39" fill="#00bfff"/>
<rect x="1167" y="644" width="5" height="13" fill="#00bfff"/>
<rect x="1177" y="648" width="1" height="22" fill="#00bfff"/>
<rect x="1175" y="658" width="5" height="4" fill="#00bfff"/>
<rect x="1185" y="634" width="1" height="29" fill="#ff0000"/>
<rect x="1183" y="642" width="5" height="21" fill="#ff0000"/>
<rect x="1193" y="639" width="1" height="18" fill="#00bfff"/>
<rect x="1191" y="643" width="5" height="3" fill="#00bfff"/>
<rect x="1201" y="644" width="1" height="20" fill="#00bfff"/>
<rect x="1199" y="645" width="5" height="13" fill="#00bfff"/>
<rect x="1209" y="654" width="1" height="11" fill="#00bfff"/>
<rect x="1207" y="657" width="5" height="3" fill="#00bfff"/>
<rect x="1217" y="637" width="1" height="29" fill="#ff0000"/>
<rect x="1215" y="640" width="5" height="20" fill="#ff0000"/>
<rect x="1225" y="630" width="1" height="13" fill="#ff0000"/>
<rect x="1223" y="638" width="5" height="3" fill="#ff0000"/>
<rect x="1233" y="634" width="1" height="13" fill="#00bfff"/>
<rect x="1231" y="639" width="5" height="5" fill="#00bfff"/>
<rect x="1241" y="638" width="1" height="9" fill="#ff0000"/>
<rect x="1239" y="638" width="5" height="6" fill="#ff0000"/>
<rect x="1249" y="633" width="1" height="6" fill="#ff0000"/>
<rect x="1247" y="637" width="5" height="2" fill="#ff0000"/>
<rect x="1257" y="628" width="1" height="10" fill="#ff0000"/>
<rect x="1255" y="631" width="5" height="7" fill="#ff0000"/>
<rect x="1265" y="630" width="1" height="5" fill="#00bfff"/>
<rect x="1263" y="631" width="5" height="2" fill="#00bfff"/>
<rect x="1273" y="634" width="1" height="13" fill="#ff0000"/>
<rect x="1271" y="636" width="5" height="5" fill="#ff0000"/>
<rect x="1281" y="619" width="1" height="19" fill="#ff0000"/>
<rect x="1279" y="627" width="5" height="9" fill="#ff0000"/>
<rect x="1289" y="612" width="1" height="49" fill="#00bfff"/>
<rect x="1287" y="626" width="5" height="30" fill="#00bfff"/>
<rect x="1297" y="623" width="1" height="44" fill="#ff0000"/>
<rect x="1295" y="653" width="5" height="3" fill="#ff0000"/>
<rect x="1305" y="638" width="1" height="17" fill="#ff0000"/>
<rect x="1303" y="643" width="5" height="12" fill="#ff0000"/>
<rect x="1313" y="643" width="1" height="17" fill="#00bfff"/>
<rect x="1311" y="643" width="5" height="9" fill="#00bfff"/>
<rect x="1321" y="634" width="1" height="27" fill="#ff0000"/>
<rect x="1319" y="643" width="5" height="9" fill="#ff0000"/>
<rect x="1329" y="632" width="1" height="22" fill="#ff0000"/>
<rect x="1327" y="635" width="5" height="10" fill="#ff0000"/>
<rect x="1337" y="589" width="1" height="47" fill="#ff0000"/>
<rect x="1335" y="595" width="5" height="41" fill="#ff0000"/>
<rect x="1345" y="572" width="1" height="37" fill="#00bfff"/>
<rect x="1343" y="594" width="5" height="8" fill="#00bfff"/>
<rect x="1353" y="598" width="1" height="82" fill="#00bfff"/>
<rect x="1351" y="601" width="5" height="71" fill="#00bfff"/>
<rect x="1361" y="670" width="1" height="34" fill="#00bfff"/>
<rect x="1359" y="670" width="5" height="12" fill="#00bfff"/>
<rect x="1369" y="655" width="1" height="31" fill="#ff0000"/>
<rect x="1367" y="671" width="5" height="11" fill="#ff0000"/>
<rect x="1377" y="658" width="1" height="29" fill="#00bfff"/>
<rect x="1375" y="671" width="5" height="9" fill="#00bfff"/>
<rect x="1385" y="662" width="1" height="29" fill="#ff0000"/>
<rect x="1383" y="665" width="5" height="15" fill="#ff0000"/>
<rect x="1393" y="650" width="1" height="65" fill="#00bfff"/>
<rect x="1391" y="665" width="5" height="3" fill="#00bfff"/>
<rect x="1401" y="638" width="1" height="43" fill="#ff0000"/>
<rect x="1399" y="642" width="5" height="26" fill="#ff0000"/>
<rect x="1409" y="633" width="1" height="34" fill="#00bfff"/>
<rect x="1407" y="642" width="5" height="16" fill="#00bfff"/>
<rect x="1417" y="638" width="1" height="28" fill="#00bfff"/>
<rect x="1415" y="656" width="5" height="5" fill="#00bfff"/>
<rect x="1425" y="649" width="1" height="17" fill="#ff0000"/>
<rect x="1423" y="653" width="5" height="8" fill="#ff0000"/>
<rect x="1433" y="640" width="1" height="14" fill="#ff0000"/>
<rect x="1431" y="641" width="5" height="13" fill="#ff0000"/>
<rect x="1441" y="610" width="1" height="33" fill="#ff0000"/>
<rect x="1439" y="611" width="5" height="30" fill="#ff0000"/>
<rect x="1449" y="611" width="1" height="14" fill="#00bfff"/>
<rect x="1447" y="611" width="5" height="11" fill="#00bfff"/>
<rect x="1457" y="618" width="1" height="10" fill="#00bfff"/>
<rect x="1455" y="621" width="5" height="4" fill="#00bfff"/>
<polyline points="-6.5,769.9 1.5,769.4 9.5,765.0 17.5,760.6 25.5,756.1 33.5,751.0 41.5,745.9 49.5,740.7 57.5,735.1 65.5,728.8 73.5,722.1 81.5,715.4 89.5,708.9 97.5,702.6 105.5,696.4 113.5,690.6 121.5,685.0 129.5,679.9 137.5,677.6 145.5,674.8 153.5,671.3 161.5,667.3 169.5,664.2 177.5,662.4 185.5,660.1 193.5,658.5 201.5,657.7 209.5,655.2 217.5,655.7 225.5,655.5 233.5,656.9 241.5,658.2 249.5,658.0 257.5,657.4 265.5,655.6 273.5,654.8 281.5,654.3 289.5,654.3 297.5,650.4 305.5,647.8 313.5,647.7 321.5,648.6 329.5,648.4 337.5,645.3 345.5,641.1 353.5,635.0 361.5,629.1 369.5,623.5 377.5,617.8 385.5,611.2 393.5,604.5 401.5,597.9 409.5,592.5 417.5,587.0 425.5,582.5 433.5,577.5 441.5,572.6 449.5,567.6 457.5,562.1 465.5,556.7 473.5,550.6 481.5,543.5 489.5,537.4 497.5,533.1 505.5,530.4 513.5,528.0 521.5,525.0 529.5,521.6 537.5,518.8 545.5,517.5 553.5,515.8 561.5,512.9 569.5,510.8 577.5,508.8 585.5,508.6 593.5,509.4 601.5,510.9 609.5,512.2 617.5,515.5 625.5,518.1 633.5,523.4 641.5,529.7 649.5,535.8 657.5,541.2 665.5,545.3 673.5,549.6 681.5,553.3 689.5,559.1 697.5,565.1 705.5,569.6 713.5,574.7 721.5,580.9 729.5,584.7 737.5,588.9 745.5,590.9 753.5,592.9 761.5,593.4 769.5,594.2 777.5,593.3 785.5,594.6 793.5,593.0 801.5,590.2 809.5,587.3 817.5,584.1 825.5,582.4 833.5,582.3 841.5,582.9 849.5,582.3 857.5,580.9 865.5,580.2 873.5,578.7 881.5,577.0 889.5,576.5 897.5,576.0 905.5,575.6 913.5,574.6 921.5,576.5 929.5,579.5 937.5,582.1 945.5,582.2 953.5,582.7 961.5,585.2 969.5,587.6 977.5,591.6 985.5,595.5 993.5,598.3 1001.5,600.4 1009.5,603.5 1017.5,607.1 1025.5,610.0 1033.5,613.9 1041.5,616.8 1049.5,619.6 1057.5,622.5 1065.5,626.2 1073.5,629.3 1081.5,632.3 1089.5,635.7 1097.5,640.7 1105.5,645.1 1113.5,648.3 1121.5,650.1 1129.5,652.5 1137.5,654.3 1145.5,656.3 1153.5,656.4 1161.5,657.2 1169.5,657.8 1177.5,657.9 1185.5,658.0 1193.5,658.1 1201.5,659.5 1209.5,661.3 1217.5,661.6 1225.5,661.6 1233.5,662.0 1241.5,660.5 1249.5,657.2 1257.5,653.1 1265.5,650.4 1273.5,649.0 1281.5,647.2 1289.5,646.5 1297.5,646.2 1305.5,644.7 1313.5,645.4 1321.5,645.4 1329.5,644.3 1337.5,640.9 1345.5,638.9 1353.5,640.2 1361.5,641.4 1369.5,641.9 1377.5,643.9 1385.5,645.2 1393.5,646.4 1401.5,646.6 1409.5,647.7 1417.5,649.2 1425.5,650.2 1433.5,650.4 1441.5,649.6 1449.5,647.9 1457.5,646.5" fill="none" stroke="#ff0000" stroke-width="1" shape-rendering="crispEdges"/>
</g>
<g shape-rendering="crispEdges">
<rect x="1" y="609" width="1845" height="1" fill="#ffa500"/>
<rect x="1" y="661" width="1845" height="1" fill="#3cb371"/>
<rect x="1" y="734" width="1845" height="1" fill="#ffff00"/>
</g>
<g>
<path d="M4,6 L13,6 L8.5,11 Z" fill="#fff"/>
<path d="M4,430 L13,430 L8.5,435 Z" fill="#fff"/>
<text x="19" y="13" fill="#fff" textLength="85.5" lengthAdjust="spacing">USDJPY.raw,H4</text>
<text x="113.3" y="13" fill="#fff" textLength="195.5" lengthAdjust="spacing">157.956 158.299 157.951 158.182</text>
<text x="19" y="437" fill="#fff" textLength="85.5" lengthAdjust="spacing">USDJPY.raw,H1</text>
<text x="113.3" y="437" fill="#fff" textLength="195.5" lengthAdjust="spacing">158.211 158.233 158.156 158.182</text>
<text x="1853" y="31.9" fill="#fff" text-anchor="start">162.038</text>
<text x="1853" y="80.9" fill="#fff" text-anchor="start">160.978</text>
<text x="1853" y="129.9" fill="#fff" text-anchor="start">159.918</text>
<text x="1853" y="178.9" fill="#fff" text-anchor="start">158.858</text>
<text x="1853" y="227.9" fill="#fff" text-anchor="start">157.798</text>
<text x="1853" y="276.9" fill="#fff" text-anchor="start">156.758</text>
<text x="1853" y="325.9" fill="#fff" text-anchor="start">155.698</text>
<text x="1853" y="374.0" fill="#fff" text-anchor="start">154.638</text>
<text x="1853" y="451.8" fill="#fff" text-anchor="start">159.599</text>
<text x="1853" y="501.2" fill="#fff" text-anchor="start">159.204</text>
<text x="1853" y="550.0" fill="#fff" text-anchor="start">158.814</text>
<text x="1853" y="598.9" fill="#fff" text-anchor="start">158.424</text>
<text x="1853" y="647.7" fill="#fff" text-anchor="start">158.034</text>
<text x="1853" y="696.9" fill="#fff" text-anchor="start">157.644</text>
<text x="1853" y="745.7" fill="#fff" text-anchor="start">157.249</text>
<text x="1853" y="794.5" fill="#fff" text-anchor="start">156.859</text>
<text x="0" y="405" fill="#fff" text-anchor="start">5 Dec 2025</text>
<text x="96" y="405" fill="#fff" text-anchor="start">9 Dec 12:00</text>
<text x="192" y="405" fill="#fff" text-anchor="start">11 Dec 12:00</text>
<text x="288" y="405" fill="#fff" text-anchor="start">15 Dec 12:00</text>
<text x="384" y="405" fill="#fff" text-anchor="start">17 Dec 12:00</text>
<text x="480" y="405" fill="#fff" text-anchor="start">19 Dec 12:00</text>
<text x="576" y="405" fill="#fff" text-anchor="start">23 Dec 12:00</text>
<text x="672" y="405" fill="#fff" text-anchor="start">26 Dec 12:00</text>
<text x="768" y="405" fill="#fff" text-anchor="start">30 Dec 12:00</text>
<text x="864" y="405" fill="#fff" text-anchor="start">2 Jan 12:00</text>
<text x="960" y="405" fill="#fff" text-anchor="start">6 Jan 12:00</text>
<text x="1056" y="405" fill="#fff" text-anchor="start">8 Jan 12:00</text>
<text x="1152" y="405" fill="#fff" text-anchor="start">12 Jan 12:00</text>
<text x="1248" y="405" fill="#fff" text-anchor="start">14 Jan 12:00</text>
<text x="1344" y="405" fill="#fff" text-anchor="start">16 Jan 12:00</text>
<text x="1440" y="405" fill="#fff" text-anchor="start">20 Jan 12:00</text>
<text x="0" y="825" fill="#fff" text-anchor="start">9 Jan 2026</text>
<text x="96" y="825" fill="#fff" text-anchor="start">9 Jan 21:00</text>
<text x="192" y="825" fill="#fff" text-anchor="start">12 Jan 09:00</text>
<text x="288" y="825" fill="#fff" text-anchor="start">12 Jan 21:00</text>
<text x="384" y="825" fill="#fff" text-anchor="start">13 Jan 09:00</text>
<text x="480" y="825" fill="#fff" text-anchor="start">13 Jan 21:00</text>
<text x="576" y="825" fill="#fff" text-anchor="start">14 Jan 09:00</text>
<text x="672" y="825" fill="#fff" text-anchor="start">14 Jan 21:00</text>
<text x="768" y="825" fill="#fff" text-anchor="start">15 Jan 09:00</text>
<text x="864" y="825" fill="#fff" text-anchor="start">15 Jan 21:00</text>
<text x="960" y="825" fill="#fff" text-anchor="start">16 Jan 09:00</text>
<text x="1056" y="825" fill="#fff" text-anchor="start">16 Jan 21:00</text>
<text x="1152" y="825" fill="#fff" text-anchor="start">19 Jan 09:00</text>
<text x="1248" y="825" fill="#fff" text-anchor="start">19 Jan 21:00</text>
<text x="1344" y="825" fill="#fff" text-anchor="start">20 Jan 09:00</text>
<text x="1440" y="825" fill="#fff" text-anchor="start">20 Jan 21:00</text>
</g>
<rect x="1848" y="199" width="56" height="14" fill="#fff" shape-rendering="crispEdges"/><text x="1853" y="210.5" fill="#000" text-anchor="start">158.182</text>
<rect x="1848" y="194" width="56" height="14" fill="#ffa500" shape-rendering="crispEdges"/><text x="1853" y="205.5" fill="#000" text-anchor="start">158.302</text>
<rect x="1848" y="240" width="56" height="14" fill="#ffff00" shape-rendering="crispEdges"/><text x="1853" y="251.5" fill="#000" text-anchor="start">157.306</text>
<rect x="1848" y="373" width="56" height="14" fill="#0000ff" shape-rendering="crispEdges"/><text x="1853" y="384.5" fill="#000" text-anchor="start">154.451</text>
<rect x="1848" y="618" width="56" height="14" fill="#fff" shape-rendering="crispEdges"/><text x="1853" y="629.5" fill="#000" text-anchor="start">158.182</text>
<rect x="1848" y="603" width="56" height="14" fill="#ffa500" shape-rendering="crispEdges"/><text x="1853" y="614.5" fill="#000" text-anchor="start">158.302</text>
<rect x="1848" y="655" width="56" height="14" fill="#3cb371" shape-rendering="crispEdges"/><text x="1853" y="666.5" fill="#000" text-anchor="start">157.888</text>
<rect x="1848" y="728" width="56" height="14" fill="#ffff00" shape-rendering="crispEdges"/><text x="1853" y="739.5" fill="#000" text-anchor="start">157.306</text>
<g shape-rendering="crispEdges">
<rect x="1526" y="267" width="150" height="37" fill="#6e6e6e"/>
<rect x="1526" y="267" width="37" height="37" fill="#33c3ec"/>
<rect x="1638" y="267" width="1" height="37" fill="#5a5a5a"/>
</g>
<path d="M1532.5,275 L1555.2,297" stroke="#262626" stroke-width="3.6" stroke-linecap="round"/>
<path d="M1532.5,275 L1555.2,297" stroke="#fff" stroke-width="1.4" stroke-linecap="round"/>
<circle cx="1581.6" cy="285.4" r="12" fill="none" stroke="#262626" stroke-width="3.4"/>
<circle cx="1581.6" cy="285.4" r="12" fill="none" stroke="#f0f0f0" stroke-width="1.3"/>
<rect x="1609" y="275.2" width="20.6" height="21.2" fill="none" stroke="#262626" stroke-width="3.4"/>
<rect x="1609" y="275.2" width="20.6" height="21.2" fill="none" stroke="#f0f0f0" stroke-width="1.3"/>
<path d="M1646.5,274.5 L1668.5,296.8 M1646.5,274.5 L1658,274.5 M1646.5,274.5 L1646.5,285.5" stroke="#262626" stroke-width="3.6" stroke-linecap="round"/>
<path d="M1646.5,274.5 L1668.5,296.8 M1646.5,274.5 L1658,274.5 M1646.5,274.5 L1646.5,285.5" stroke="#f0f0f0" stroke-width="1.4" stroke-linecap="round"/>
<circle cx="1556.2" cy="274.3" r="4.9" fill="#262626"/>
<circle cx="1593.7" cy="274.3" r="4.9" fill="#262626"/>
<circle cx="1631.2" cy="274.3" r="4.9" fill="#262626"/>
<circle cx="1668.2" cy="274.3" r="4.9" fill="#262626"/>
<circle cx="1697.3" cy="84.1" r="20.8" fill="#000"/>
<path d="M1689.6,69.8 L1704.9,69.8 L1709.5,82.5 C1705,87 1702.5,93 1701,100 L1694,100 C1692.5,93 1690,87 1685,82.5 Z" fill="#fff"/>
<circle cx="1697.2" cy="81.8" r="4.6" fill="#000"/>
<rect x="1696.2" y="84" width="2.6" height="17" fill="#000"/>
<rect x="1675" y="113" width="44" height="533" fill="#05051a" opacity="0.6"/>
<rect x="1676" y="114" width="42" height="530" fill="#ffffff"/>
<rect x="1678" y="154" width="1" height="413" fill="#dfe3e6"/>
<rect x="1678" y="117" width="38" height="37" fill="#33c3ec"/>
<rect x="1679" y="154" width="37" height="38" fill="#33c3ec"/>
<rect x="1679" y="154" width="37" height="1" fill="#5fd0f0"/>
<rect x="1679" y="229" width="37" height="1" fill="#eef6ee"/>
<rect x="1679" y="267" width="37" height="1" fill="#eef6ee"/>
<rect x="1679" y="304" width="37" height="1" fill="#eef6ee"/>
<rect x="1679" y="342" width="37" height="1" fill="#eef6ee"/>
<rect x="1679" y="379" width="37" height="1" fill="#eef6ee"/>
<rect x="1679" y="417" width="37" height="1" fill="#eef6ee"/>
<rect x="1679" y="454" width="37" height="1" fill="#eef6ee"/>
<rect x="1679" y="492" width="37" height="1" fill="#eef6ee"/>
<rect x="1679" y="529" width="37" height="1" fill="#eef6ee"/>
<path d="M1682.9,135 C1688,128.5 1692.5,126.6 1697.2,126.6 C1701.9,126.6 1706.4,128.5 1711.5,135 C1706.4,141.5 1701.9,143.4 1697.2,143.4 C1692.5,143.4 1688,141.5 1682.9,135 Z" fill="#fff" stroke="#2b2b2b" stroke-width="1.8" stroke-linejoin="round"/>
<circle cx="1697.2" cy="134.8" r="7.3" fill="#fff" stroke="#2b2b2b" stroke-width="1.5"/>
<circle cx="1697.2" cy="134.8" r="4.6" fill="#2b2b2b"/>
<path d="M1684.3,161 L1710.2,168.8 L1699.3,172.2 L1709.4,182 L1706,185.3 L1695.6,175.2 L1692.8,185.3 Z" fill="#fff" stroke="#2b2b2b" stroke-width="1.6" stroke-linejoin="round"/>
<path d="M1708,192 L1716,184 L1716,192 Z" fill="#262626"/>
<circle cx="1697" cy="212.7" r="10.6" fill="none" stroke="#3a3a3a" stroke-width="1.4"/>
<circle cx="1697" cy="212.7" r="8.6" fill="none" stroke="#3a3a3a" stroke-width="1.2"/>
<rect x="1693.6" y="197.2" width="6.6" height="3.2" rx="1" fill="#fff" stroke="#3a3a3a" stroke-width="1.3"/>
<rect x="1696.2" y="200.4" width="1.6" height="1.6" fill="#3a3a3a"/>
<path d="M1686,204 L1689.5,201.5 M1708,204 L1705,201.5" stroke="#3a3a3a" stroke-width="1.4"/>
<path d="M1697,206 L1697,213" stroke="#555" stroke-width="1"/>
<path d="M1684.4,222.6 L1709.8,198.1" stroke="#2b2b2b" stroke-width="2.2" stroke-linecap="round"/>
<path d="M1708,229 L1716,221 L1716,229 Z" fill="#262626"/>
<g transform="translate(1693.5,246.9) rotate(45)">
<path d="M-16,0 L-7.7,-8 L16,-8 L16,8 L-7.7,8 Z" fill="#fff"/>
<path d="M-5.5,2.7 L11,2.7 L11,8 L-7.7,8 Z" fill="#dcdcdc"/>
<path d="M-3.5,-2.7 L-5.5,-2.7 L-5.5,2.7 L11,2.7 L11,-2.7 Z" fill="#ededed"/>
<path d="M-7.7,8 L-5.5,2.7 L-5.5,-2.7 L-3.5,-2.7 L-3.5,-0.5 M-7.7,-8 L-3.5,-2.7" fill="none" stroke="#2b2b2b" stroke-width="1.3"/>
<path d="M-5.5,2.7 L16,2.7 M-3.5,-2.7 L16,-2.7" stroke="#2b2b2b" stroke-width="1.2"/>
<path d="M9,-8 L9,8 M11.3,-8 L11.3,8" stroke="#2b2b2b" stroke-width="1.2"/>
<rect x="11.3" y="-2.7" width="4.7" height="5.4" fill="#fff"/>
<path d="M-16,0 L-7.7,-8 L16,-8 L16,8 L-7.7,8 Z" fill="none" stroke="#2b2b2b" stroke-width="1.5" stroke-linejoin="round"/>
<path d="M-16,0 L-11.1,-4.8 L-11.1,4.8 Z" fill="#2b2b2b" stroke="#2b2b2b" stroke-width="1"/>
</g>
<path d="M1708,267 L1716,259 L1716,267 Z" fill="#262626"/>
<path d="M1685,274 L1708.2,296.2" stroke="#2b2b2b" stroke-width="4.2" stroke-linecap="round"/>
<path d="M1685,274 L1708.2,296.2" stroke="#fff" stroke-width="1.6" stroke-linecap="round"/>
<circle cx="1710.9" cy="274.3" r="5" fill="#ff0a8a"/>
<path d="M1708,304 L1716,296 L1716,304 Z" fill="#262626"/>
<g transform="translate(1697,322.5) rotate(45)">
<rect x="-14.5" y="-6.3" width="9" height="12.6" fill="#f0f0f0" stroke="#2b2b2b" stroke-width="1.5"/>
<path d="M-14.5,0 L-5.5,0" stroke="#2b2b2b" stroke-width="1.3"/>
<rect x="-5.5" y="-7" width="17.5" height="14" rx="1.2" fill="#e8e8e8" stroke="#2b2b2b" stroke-width="1.5"/>
<rect x="-5.5" y="2.5" width="17.5" height="4.5" fill="#d6d6d6" stroke="#2b2b2b" stroke-width="1.3"/>
<rect x="12" y="-6" width="2.8" height="12" fill="#f4f4f4" stroke="#2b2b2b" stroke-width="1.2"/>
</g>
<circle cx="1697.1" cy="361" r="3.6" fill="#2b2b2b"/>
<path d="M1683,394.7 L1693.3,386.5 L1693.3,391 L1702,391 C1712,391 1712.5,408 1702,409.5 L1698.6,409.5 L1698.6,404.5 L1702,404.5 C1706,404 1706,397.5 1702,397.5 L1693.3,397.5 L1693.3,403.2 Z" fill="#fff" stroke="#2b2b2b" stroke-width="1.5" stroke-linejoin="round"/>
<rect x="1693.3" y="422" width="7.4" height="3" rx="1" fill="#fff" stroke="#444" stroke-width="1.2"/>
<rect x="1686" y="425" width="21.6" height="5.2" rx="1.5" fill="#f4f4f4" stroke="#444" stroke-width="1.4"/>
<path d="M1687.5,430.2 L1688.2,446 C1688.3,447.3 1689,447.8 1690,447.8 L1704,447.8 C1705,447.8 1705.7,447.3 1705.8,446 L1706.5,430.2" fill="#ececec" stroke="#444" stroke-width="1.4"/>
<path d="M1692.3,431 L1692.3,445 M1701.7,431 L1701.7,445" stroke="#555" stroke-width="1.2"/>
<rect x="1688.5" y="443.5" width="17" height="2" fill="#fff"/>
<path d="M1688.5,443.5 L1705.5,443.5" stroke="#555" stroke-width="0.8"/>
<rect x="1692.3" y="459.2" width="8.4" height="3.2" rx="1" fill="#fff" stroke="#444" stroke-width="1.2"/>
<path d="M1692.5,480 L1691.2,486 M1700.7,480 L1702,486" stroke="#444" stroke-width="2.6" stroke-linecap="round"/>
<path d="M1692.5,480.5 L1691.5,485.5 M1700.7,480.5 L1701.7,485.5" stroke="#fff" stroke-width="0.9" stroke-linecap="round"/>
<rect x="1690" y="478" width="13" height="3" fill="#f4f4f4" stroke="#444" stroke-width="1.1"/>
<rect x="1684.8" y="462" width="23" height="16.5" rx="2" fill="#fff" stroke="#444" stroke-width="1.4"/>
<rect x="1687.6" y="465" width="17.6" height="11" rx="0.8" fill="#dcdcdc" stroke="#444" stroke-width="1.2"/>
<circle cx="1710.9" cy="461.9" r="5" fill="#ff0a8a"/>
<path d="M1708,492 L1716,484 L1716,492 Z" fill="#262626"/>
<path d="M1691.5,504.6 L1691.5,501.4 L1701.7,501.4 L1701.7,504.6" fill="#fff" stroke="#444" stroke-width="1.3"/>
<rect x="1693.5" y="502.5" width="6" height="1.3" fill="#444"/>
<rect x="1683.8" y="504.6" width="27" height="18" rx="2" fill="#fff" stroke="#444" stroke-width="1.4"/>
<circle cx="1694" cy="513.4" r="7" fill="#fff" stroke="#444" stroke-width="1.3"/>
<circle cx="1694" cy="513.4" r="5" fill="#333"/>
<circle cx="1695.3" cy="511.9" r="1.3" fill="#fff"/>
<circle cx="1705.8" cy="510.2" r="1.9" fill="#fff" stroke="#444" stroke-width="1.1"/>
<rect x="1685.9" y="537.3" width="22" height="23" rx="2.2" fill="#fff" stroke="#444" stroke-width="1.4"/>
<path d="M1690.2,538.5 C1691,535 1694,535 1695,534.5 C1695.5,532.8 1698.5,532.8 1699,534.5 C1700,535 1703,535 1703.8,538.5 Z" fill="#fff" stroke="#444" stroke-width="1.3"/>
<path d="M1690,543.8 L1704.6,543.8 M1690,548.7 L1704.6,548.7 M1690,553.7 L1704.6,553.7" stroke="#444" stroke-width="1.3"/>
<g shape-rendering="crispEdges">
<rect x="1679" y="567" width="18" height="19" fill="#00a8ec"/>
<rect x="1697" y="567" width="19" height="19" fill="#ffee00"/>
<rect x="1679" y="586" width="18" height="18" fill="#ff0a8a"/>
<rect x="1697" y="586" width="19" height="18" fill="#000"/>
<rect x="1679" y="604" width="37" height="38" fill="#ffee00"/>
</g>
</svg>
</body></html>
